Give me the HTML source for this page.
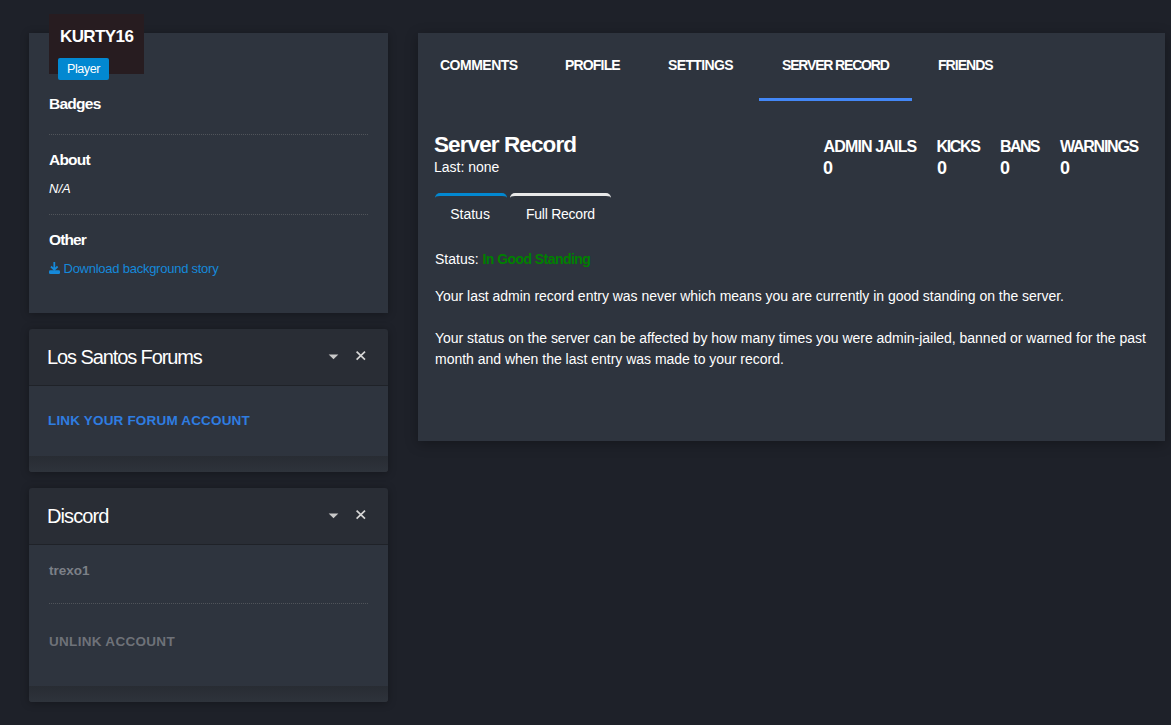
<!DOCTYPE html>
<html><head><meta charset="utf-8">
<style>
*{box-sizing:border-box;margin:0;padding:0}
html,body{width:1171px;height:725px;overflow:hidden;background:#1e2129;font-family:"Liberation Sans",sans-serif;color:#fff}
.abs{position:absolute}
.card{position:absolute;background:#2e343e;border-radius:3px;box-shadow:0 1px 8px rgba(0,0,0,0.3)}
.t{position:absolute;white-space:nowrap;line-height:1}
.sep{position:absolute;height:1px;border-top:1px dotted #50545a}
</style></head><body>
<!-- profile card -->
<div class="card" style="left:29px;top:33px;width:359px;height:280px;border-radius:0"></div>
<div class="abs" style="left:49px;top:14px;width:95px;height:60px;background:#271c20"></div>
<div class="t" style="left:60px;top:28.3px;font-size:17px;font-weight:bold;letter-spacing:-0.6px">KURTY16</div>
<div class="abs" style="left:58px;top:58px;width:51px;height:22px;background:#0288d1;border-radius:2px"></div>
<div class="t" style="left:67px;top:62.9px;font-size:12.5px;letter-spacing:-0.4px">Player</div>
<div class="t" style="left:49px;top:95.6px;font-size:15.5px;font-weight:bold;letter-spacing:-0.72px">Badges</div>
<div class="sep" style="left:49px;top:134px;width:319px"></div>
<div class="t" style="left:49px;top:151.6px;font-size:15.5px;font-weight:bold;letter-spacing:-0.78px">About</div>
<div class="t" style="left:49px;top:182px;font-size:13px;font-style:italic">N/A</div>
<div class="sep" style="left:49px;top:214px;width:319px"></div>
<div class="t" style="left:49px;top:231.6px;font-size:15.5px;font-weight:bold;letter-spacing:-0.88px">Other</div>
<svg class="abs" style="left:48px;top:261px" width="13" height="14" viewBox="0 0 13 14"><path d="M6.3 1v7.5M3 5.5l3.3 3.3 3.3-3.3" stroke="#1589da" stroke-width="1.8" fill="none"/><rect x="1" y="9.2" width="11" height="3.8" rx="1.2" fill="#1589da"/></svg>
<div class="t" style="left:63.5px;top:262px;font-size:13px;color:#1589da;letter-spacing:-0.25px">Download background story</div>

<!-- forums card -->
<div class="card" style="left:29px;top:329px;width:359px;height:143px;background:#292d35;overflow:hidden"><div class="abs" style="left:0;top:56px;width:359px;height:71px;background:#2e343e;border-top:1px solid #1f2228"></div><div class="abs" style="left:0;top:127px;width:359px;height:16px;background:linear-gradient(#282c33,#2e333b)"></div></div>
<div class="t" style="left:47px;top:347px;font-size:20px;letter-spacing:-1.1px">Los Santos Forums</div>
<svg class="abs" style="left:328px;top:354px" width="11" height="6" viewBox="0 0 11 6"><path d="M0.7 0.6h9.6l-4.8 4.6z" fill="#c8c8c8"/></svg>
<svg class="abs" style="left:355px;top:350px" width="12" height="11" viewBox="0 0 12 11"><path d="M1.6 1.6l8.4 8M10 1.6l-8.4 8" stroke="#d6d6d6" stroke-width="1.7"/></svg>
<div class="t" style="left:48px;top:413.8px;font-size:13.5px;font-weight:bold;color:#2f7de1;letter-spacing:0.17px">LINK YOUR FORUM ACCOUNT</div>

<!-- discord card -->
<div class="card" style="left:29px;top:488px;width:359px;height:214px;background:#292d35;overflow:hidden"><div class="abs" style="left:0;top:56px;width:359px;height:142px;background:#2e343e;border-top:1px solid #1f2228"></div><div class="abs" style="left:0;top:198px;width:359px;height:16px;background:linear-gradient(#282c33,#2e333b)"></div></div>
<div class="t" style="left:47px;top:506px;font-size:20px;letter-spacing:-0.9px">Discord</div>
<svg class="abs" style="left:328px;top:513px" width="11" height="6" viewBox="0 0 11 6"><path d="M0.7 0.6h9.6l-4.8 4.6z" fill="#c8c8c8"/></svg>
<svg class="abs" style="left:355px;top:509px" width="12" height="11" viewBox="0 0 12 11"><path d="M1.6 1.6l8.4 8M10 1.6l-8.4 8" stroke="#d6d6d6" stroke-width="1.7"/></svg>
<div class="t" style="left:49px;top:563.5px;font-size:13.5px;font-weight:bold;color:#7c8088">trexo1</div>
<div class="sep" style="left:49px;top:603px;width:319px"></div>
<div class="t" style="left:49px;top:635px;font-size:13.5px;font-weight:bold;color:#6e7279;letter-spacing:0.3px">UNLINK ACCOUNT</div>

<!-- right panel -->
<div class="card" style="left:418px;top:33px;width:747px;height:408px;border-radius:0;box-shadow:0 3px 12px rgba(0,0,0,0.3)"></div>
<div class="t" style="left:440px;top:58px;font-size:14px;font-weight:bold;letter-spacing:-0.5px">COMMENTS</div>
<div class="t" style="left:565px;top:58px;font-size:14px;font-weight:bold;letter-spacing:-0.83px">PROFILE</div>
<div class="t" style="left:668px;top:58px;font-size:14px;font-weight:bold;letter-spacing:-0.64px">SETTINGS</div>
<div class="t" style="left:782px;top:58px;font-size:14px;font-weight:bold;letter-spacing:-1.17px">SERVER RECORD</div>
<div class="t" style="left:938px;top:58px;font-size:14px;font-weight:bold;letter-spacing:-0.97px">FRIENDS</div>
<div class="abs" style="left:759px;top:98px;width:153px;height:3px;background:#4387f6"></div>

<div class="t" style="left:434px;top:133.8px;font-size:22.5px;font-weight:bold;letter-spacing:-0.9px">Server Record</div>
<div class="t" style="left:434px;top:160px;font-size:14px">Last: none</div>
<div class="t" style="left:823.5px;top:138.8px;font-size:16px;font-weight:bold;letter-spacing:-0.85px">ADMIN JAILS</div>
<div class="t" style="left:936.5px;top:138.8px;font-size:16px;font-weight:bold;letter-spacing:-1.35px">KICKS</div>
<div class="t" style="left:1000px;top:138.8px;font-size:16px;font-weight:bold;letter-spacing:-1.6px">BANS</div>
<div class="t" style="left:1060px;top:138.8px;font-size:16px;font-weight:bold;letter-spacing:-1.25px">WARNINGS</div>
<div class="t" style="left:823px;top:158.7px;font-size:18px;font-weight:bold">0</div>
<div class="t" style="left:937px;top:158.7px;font-size:18px;font-weight:bold">0</div>
<div class="t" style="left:1000px;top:158.7px;font-size:18px;font-weight:bold">0</div>
<div class="t" style="left:1060px;top:158.7px;font-size:18px;font-weight:bold">0</div>

<div class="abs" style="left:435px;top:193px;width:72px;height:10px;border-top:3px solid #0288d1;border-radius:5px 5px 0 0"></div>
<div class="abs" style="left:510px;top:193px;width:101px;height:10px;border-top:3px solid #e8e8e8;border-radius:5px 5px 0 0"></div>
<div class="t" style="left:450.2px;top:207px;font-size:14px">Status</div>
<div class="t" style="left:526px;top:207px;font-size:14px;letter-spacing:-0.25px">Full Record</div>

<div class="t" style="left:435px;top:252px;font-size:14px">Status: <span style="color:#008000;font-weight:bold;letter-spacing:-0.55px">In Good Standing</span></div>
<div class="t" style="left:435px;top:289px;font-size:14px;letter-spacing:-0.025px">Your last admin record entry was never which means you are currently in good standing on the server.</div>
<div class="t" style="left:435px;top:331px;font-size:14px;letter-spacing:-0.018px">Your status on the server can be affected by how many times you were admin-jailed, banned or warned for the past</div>
<div class="t" style="left:435px;top:352px;font-size:14px;letter-spacing:-0.01px">month and when the last entry was made to your record.</div>
</body></html>
